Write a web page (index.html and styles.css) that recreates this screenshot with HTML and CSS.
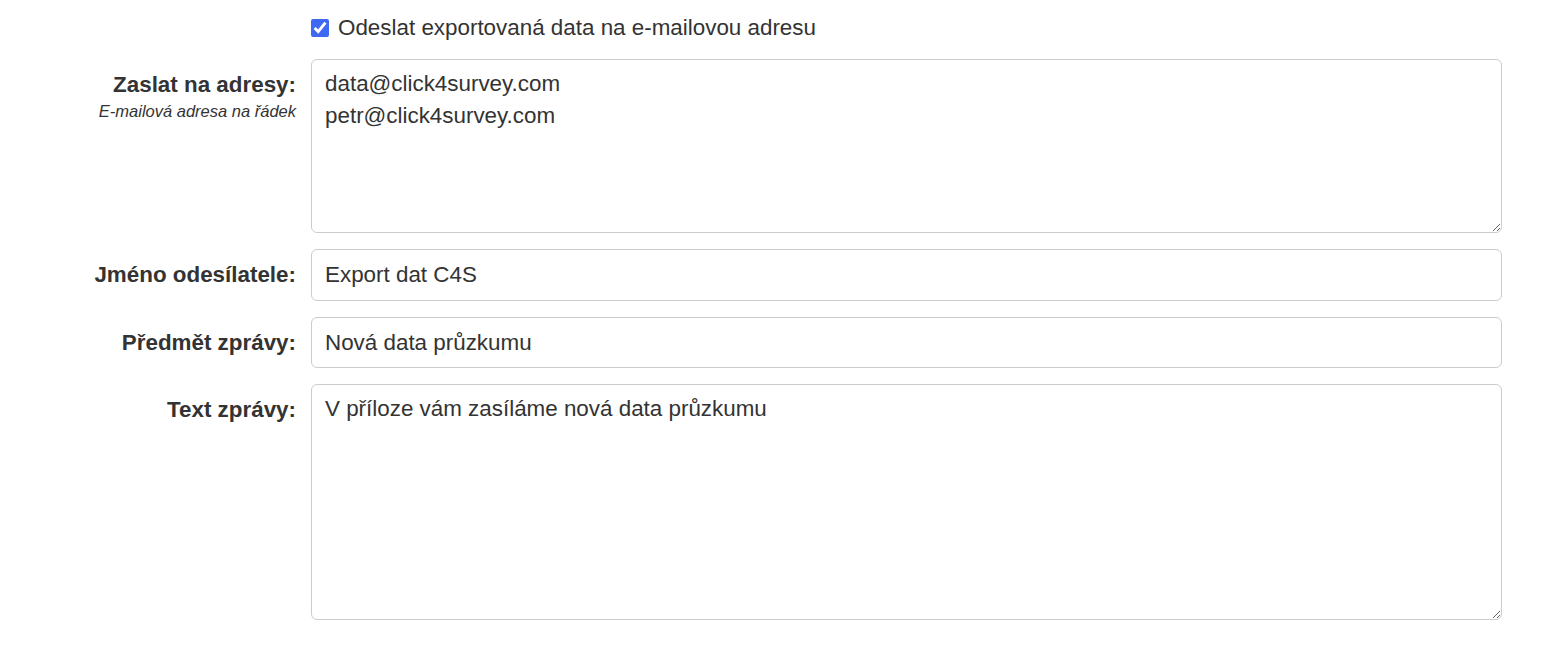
FILE: index.html
```html
<!DOCTYPE html>
<html lang="cs">
<head>
<meta charset="utf-8">
<title>Export</title>
<link rel="stylesheet" href="styles.css">
</head>
<body>
<form class="form">
  <div class="row">
    <div class="label-col"></div>
    <label class="check">
      <input type="checkbox" checked>
      <span>Odeslat exportovaná data na e-mailovou adresu</span>
    </label>
  </div>
  <div class="row">
    <div class="label-col">
      <div class="label">Zaslat na adresy:</div>
      <div class="hint">E-mailová adresa na řádek</div>
    </div>
    <textarea class="control area-small">data@click4survey.com
petr@click4survey.com</textarea>
  </div>
  <div class="row">
    <div class="label-col"><div class="label">Jméno odesílatele:</div></div>
    <input class="control" type="text" value="Export dat C4S">
  </div>
  <div class="row">
    <div class="label-col"><div class="label">Předmět zprávy:</div></div>
    <input class="control" type="text" value="Nová data průzkumu">
  </div>
  <div class="row">
    <div class="label-col"><div class="label">Text zprávy:</div></div>
    <textarea class="control area-large">V příloze vám zasíláme nová data průzkumu</textarea>
  </div>
</form>
</body>
</html>
```

FILE: styles.css
```css
html, body {
  margin: 0;
  padding: 0;
  background: #fff;
}
body {
  font-family: "Liberation Sans", Arial, sans-serif;
  font-size: 22.4px;
  line-height: 31.4px;
  color: #333;
}
.form {
  padding: 12px 39px 0 0;
}
.row {
  display: grid;
  grid-template-columns: 296px 1fr;
  column-gap: 15px;
  margin-bottom: 16px;
}
.label-col {
  text-align: right;
  padding-top: 10px;
}
.label {
  font-weight: bold;
}
.hint {
  font-style: italic;
  font-size: 16.5px;
  line-height: 20px;
  margin-top: 0;
}
.check {
  display: flex;
  align-items: center;
  gap: 9px;
  cursor: pointer;
}
.check input {
  width: 18px;
  height: 18px;
  margin: 0;
  accent-color: #3f68f4;
}
.control {
  box-sizing: border-box;
  width: 100%;
  font-family: inherit;
  font-size: 22.4px;
  line-height: 31.4px;
  color: #333;
  background: #fff;
  border: 1px solid #ccc;
  border-radius: 6px;
  padding: 9px 13px;
  margin: 0;
  outline: none;
}
textarea.control {
  padding-top: 8px;
  resize: vertical;
  display: block;
}
.area-small {
  height: 174px;
}
.area-large {
  height: 236px;
}
```
